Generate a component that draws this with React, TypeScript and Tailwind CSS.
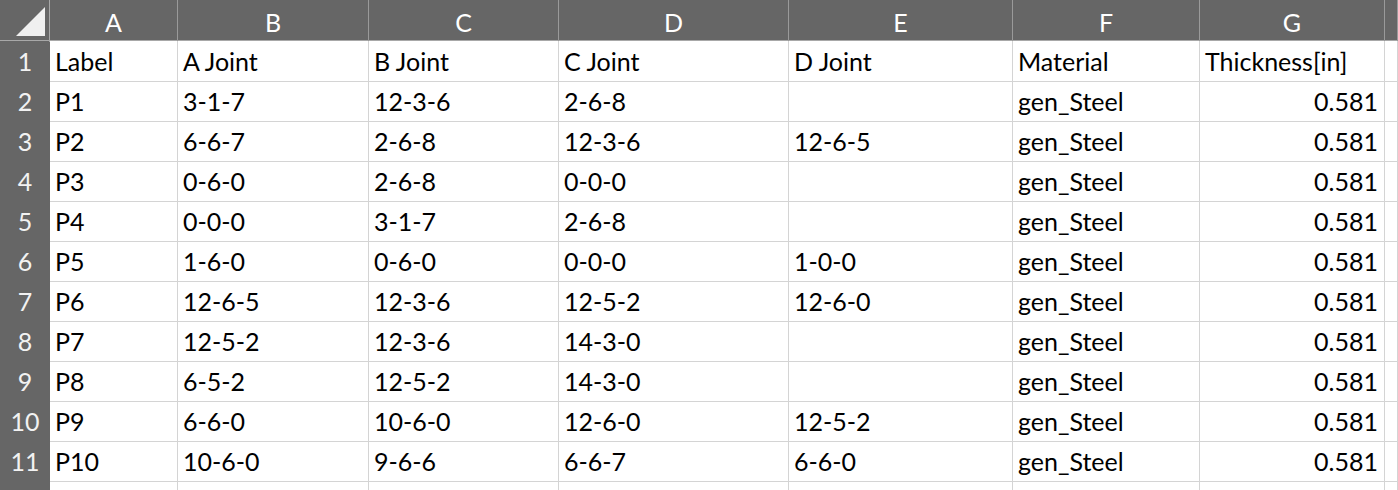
import React from "react";

const cols = ["A", "B", "C", "D", "E", "F", "G", ""];
const rows: string[][] = [
  ["Label", "A Joint", "B Joint", "C Joint", "D Joint", "Material", "Thickness[in]", ""],
  ["P1", "3-1-7", "12-3-6", "2-6-8", "", "gen_Steel", "0.581", ""],
  ["P2", "6-6-7", "2-6-8", "12-3-6", "12-6-5", "gen_Steel", "0.581", ""],
  ["P3", "0-6-0", "2-6-8", "0-0-0", "", "gen_Steel", "0.581", ""],
  ["P4", "0-0-0", "3-1-7", "2-6-8", "", "gen_Steel", "0.581", ""],
  ["P5", "1-6-0", "0-6-0", "0-0-0", "1-0-0", "gen_Steel", "0.581", ""],
  ["P6", "12-6-5", "12-3-6", "12-5-2", "12-6-0", "gen_Steel", "0.581", ""],
  ["P7", "12-5-2", "12-3-6", "14-3-0", "", "gen_Steel", "0.581", ""],
  ["P8", "6-5-2", "12-5-2", "14-3-0", "", "gen_Steel", "0.581", ""],
  ["P9", "6-6-0", "10-6-0", "12-6-0", "12-5-2", "gen_Steel", "0.581", ""],
  ["P10", "10-6-0", "9-6-6", "6-6-7", "6-6-0", "gen_Steel", "0.581", ""],
  ["", "", "", "", "", "", "", ""],
];

const grid =
  "grid grid-cols-[50px_128px_191px_190px_230px_224px_187px_185px_1fr]";

export default function App() {
  return (
    <div
      className="w-[1398px] h-[490px] overflow-hidden bg-white text-black"
      style={{ fontFamily: "Lato, 'Open Sans', sans-serif" }}
    >
      <div className={`${grid} h-[41px] bg-[#666666] border-b border-[#a8a8a8]`}>
        <div className="relative border-r border-[#a8a8a8]">
          <svg className="absolute left-0 top-0" width="49" height="40" viewBox="0 0 49 40">
            <polygon points="16,36 45,7 45,36" fill="#f0f0f0" />
          </svg>
        </div>
        {cols.map((c, i) => (
          <div
            key={i}
            className="flex items-center justify-center border-r border-[#9a9a9a] pt-[4px] text-[25px] text-white"
          >
            {c}
          </div>
        ))}
      </div>
      {rows.map((r, ri) => (
        <div key={ri} className={`${grid} h-[40px]`}>
          <div className="flex items-center justify-center bg-[#666666] border-b border-[#a8a8a8] pt-[2px] text-[25px] text-[#f2f2f2]">
            {ri < 11 ? ri + 1 : ""}
          </div>
          {r.map((v, ci) => (
            <div
              key={ci}
              className={`flex items-center border-r border-b border-[#d4d4d4] px-[5px] pt-[2px] text-[25px] whitespace-nowrap ${
                ci === 6 && ri > 0 ? "justify-end pr-[6px]" : "justify-start"
              }`}
            >
              {v}
            </div>
          ))}
        </div>
      ))}
    </div>
  );
}
